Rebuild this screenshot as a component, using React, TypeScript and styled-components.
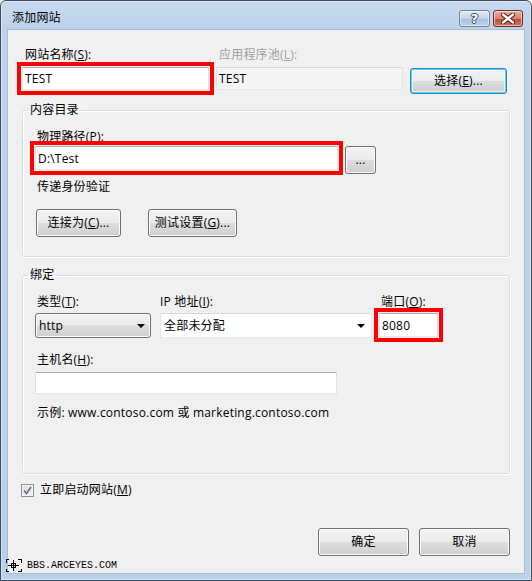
import React from 'react';
import styled, { createGlobalStyle } from 'styled-components';

const FONT = `"Open Sans", "Noto Sans CJK SC", sans-serif`;

const Global = createGlobalStyle`
  html, body { margin: 0; padding: 0; background: #ffffff; }
  * { box-sizing: border-box; }
`;

const Window = styled.div`
  position: relative;
  width: 532px;
  height: 581px;
  display: flex;
  flex-direction: column;
  font-family: ${FONT};
  font-size: 12px;
  letter-spacing: 0.2px;
  color: #000;
  border: 1px solid #3b4b5f;
  border-radius: 6px 6px 0 0;
  background: linear-gradient(to bottom, #c6d9ee 0px, #bdd3eb 30px, #b9d1ea 100%);
  padding: 0 6px 6px 6px;
  box-shadow: inset 0 0 0 1px rgba(255, 255, 255, 0.45);
`;

const TitleBar = styled.div`
  height: 28px;
  display: flex;
  align-items: flex-start;
  flex-shrink: 0;
`;

const Title = styled.div`
  margin: 9px 0 0 5px;
  line-height: 16px;
  font-size: 12px;
  color: #000;
  flex: 1;
`;

const CaptionButtons = styled.div`
  display: flex;
  gap: 3px;
  margin: 9px 2px 0 0;
`;

const CaptionButton = styled.div<{ $kind: 'help' | 'close' }>`
  width: ${(p) => (p.$kind === 'help' ? 31 : 30)}px;
  height: 17px;
  border-radius: 3px;
  border: 1px solid ${(p) => (p.$kind === 'help' ? '#6e8096' : '#6b2a22')};
  background: ${(p) =>
    p.$kind === 'help'
      ? 'linear-gradient(to bottom, #e3ecf6 0%, #c3d4e8 50%, #a9c0dc 51%, #bcd2ea 100%)'
      : 'linear-gradient(to bottom, #eab1a4 0%, #d5806f 50%, #c2493a 51%, #d0715c 100%)'};
  box-shadow: inset 0 0 0 1px rgba(255, 255, 255, 0.55);
  display: flex;
  align-items: center;
  justify-content: center;
`;

const HelpGlyph = styled.span`
  font-family: "DejaVu Sans", sans-serif;
  font-weight: bold;
  font-size: 13px;
  line-height: 13px;
  color: #ffffff;
  text-shadow: 1px 0 0 #3d4f66, -1px 0 0 #3d4f66, 0 1px 0 #3d4f66, 0 -1px 0 #3d4f66;
`;

const Client = styled.div`
  position: relative;
  flex: 1;
  background: #f0f0f0;
  border: 1px solid #a9bcd3;
  padding: 17px 13px 0 14px;
  display: flex;
  flex-direction: column;
`;

const TopGrid = styled.div`
  display: grid;
  grid-template-columns: 187px 187px 97px;
  column-gap: 7px;
  row-gap: 4px;
  align-items: start;
`;

const Label = styled.div<{ $indent?: number; $disabled?: boolean }>`
  line-height: 16px;
  padding-left: ${(p) => (p.$indent ?? 2)}px;
  color: ${(p) => (p.$disabled ? '#a0a0a0' : '#000')};
  white-space: nowrap;
  u { text-decoration: underline; text-underline-offset: 1px; }
`;

const TextBox = styled.div<{ $h?: number; $w?: number; $mark?: boolean; $disabled?: boolean }>`
  height: ${(p) => p.$h ?? 23}px;
  ${(p) => (p.$w ? `width: ${p.$w}px;` : '')}
  border: 1px solid;
  border-color: ${(p) => (p.$disabled ? '#d7d7d7 #e3e3e3 #e8e8e8 #e3e3e3' : '#abadb3 #dbdfe6 #e3e9ef #e2e3ea')};
  background: ${(p) => (p.$disabled ? '#f4f4f4' : '#ffffff')};
  display: flex;
  align-items: center;
  padding: 1px 0 0 2px;
  line-height: 16px;
  color: #000;
  ${(p) => (p.$mark ? 'outline: 4px solid #ff0000; outline-offset: 1px;' : '')}
`;

const Button = styled.button<{ $w: number; $h?: number; $default?: boolean }>`
  width: ${(p) => p.$w}px;
  height: ${(p) => p.$h ?? 28}px;
  padding: 0;
  font-family: ${FONT};
  font-size: 12px;
  letter-spacing: 0.2px;
  line-height: 16px;
  color: #000;
  border-radius: 3px;
  border: 1px solid ${(p) => (p.$default ? '#3c7fb1' : '#707070')};
  background: linear-gradient(to bottom, #f2f2f2 0%, #ebebeb 49%, #dddddd 50%, #cfcfcf 100%);
  box-shadow: ${(p) =>
    p.$default ? 'inset 0 0 0 1px #48d8fb, inset 0 0 0 2px rgba(255,255,255,0.6)' : 'inset 0 0 0 1px #fcfcfc'};
  display: flex;
  align-items: center;
  justify-content: center;
  u { text-decoration: underline; text-underline-offset: 1px; }
`;

const Group = styled.fieldset<{ $mt: number; $pb: number }>`
  margin: ${(p) => p.$mt}px 1px 0 0;
  padding: 0 0 ${(p) => p.$pb}px 0;
  border: 1px solid #d5dfe5;
  border-radius: 3px;
  box-shadow: inset 1px 1px 0 #ffffff, 1px 1px 0 #ffffff;
  min-width: 0;
`;

const Legend = styled.legend`
  margin-left: 5px;
  padding: 0 2px;
  line-height: 16px;
  font-size: 12px;
`;

const GroupBody = styled.div`
  padding: 11px 0 0 12px;
  display: flex;
  flex-direction: column;
`;

const PathRow = styled.div`
  display: flex;
  gap: 7px;
  align-items: flex-start;
  margin-top: 1px;
`;

const PlainText = styled.div<{ $mt: number; $indent?: number }>`
  margin-top: ${(p) => p.$mt}px;
  padding-left: ${(p) => p.$indent ?? 2}px;
  line-height: 16px;
  white-space: nowrap;
  u { text-decoration: underline; text-underline-offset: 1px; }
`;

const ButtonRow = styled.div<{ $mt: number; $gap: number }>`
  display: flex;
  gap: ${(p) => p.$gap}px;
  margin-top: ${(p) => p.$mt}px;
  padding-left: 1px;
`;

const BindGrid = styled.div`
  display: grid;
  grid-template-columns: 116px 212px 57px;
  column-gap: 9px;
  row-gap: 3px;
  align-items: start;
  & > :nth-child(3n) { margin-left: -2px; }
`;

const Arrow = styled.span`
  width: 0;
  height: 0;
  border-left: 4px solid transparent;
  border-right: 4px solid transparent;
  border-top: 4px solid #000;
  margin-left: auto;
`;

const DropList = styled.div`
  height: 25px;
  border: 1px solid #707070;
  border-radius: 3px;
  background: linear-gradient(to bottom, #f2f2f2 0%, #ebebeb 49%, #dddddd 50%, #cfcfcf 100%);
  box-shadow: inset 0 0 0 1px #fcfcfc;
  display: flex;
  align-items: center;
  padding: 1px 5px 0 3px;
  line-height: 16px;
`;

const Combo = styled.div`
  height: 25px;
  border: 1px solid;
  border-color: #dadada #e3e3e3 #e8e8e8 #e3e3e3;
  background: #ffffff;
  display: flex;
  align-items: center;
  padding: 1px 6px 0 3px;
  line-height: 16px;
`;

const CheckRow = styled.div`
  display: flex;
  align-items: center;
  gap: 6px;
  margin-top: 8px;
  margin-left: -1px;
  line-height: 16px;
  u { text-decoration: underline; text-underline-offset: 1px; }
`;

const CheckBox = styled.span`
  width: 13px;
  height: 13px;
  border: 1px solid #8e8f8f;
  background: linear-gradient(135deg, #dcdcdc 0%, #f4f4f4 100%);
  box-shadow: inset 0 0 0 1px #f4f4f4;
  display: flex;
  align-items: center;
  justify-content: center;
`;

const Footer = styled.div`
  display: flex;
  justify-content: flex-end;
  gap: 10px;
  margin-top: 30px;
  margin-right: 1px;
`;

const Watermark = styled.div`
  position: absolute;
  left: -3px;
  bottom: 0px;
  display: flex;
  align-items: center;
  gap: 5px;
  font-family: "Liberation Mono", monospace;
  font-size: 10px;
  letter-spacing: 0;
  line-height: 12px;
  color: #000;
`;

function CloseGlyph() {
  return (
    <svg width="14" height="11" viewBox="0 0 14 11">
      <path d="M2 1.5 L12 9.5 M12 1.5 L2 9.5" stroke="#4a1a14" strokeWidth="4.4" strokeLinecap="round" />
      <path d="M2 1.5 L12 9.5 M12 1.5 L2 9.5" stroke="#ffffff" strokeWidth="2.4" strokeLinecap="round" />
    </svg>
  );
}

function CheckMark() {
  return (
    <svg width="9" height="9" viewBox="0 0 9 9">
      <path d="M1 4.5 L3.5 7.5 L8 1" stroke="#5b6f9e" strokeWidth="1.6" fill="none" />
    </svg>
  );
}

function CrossIcon() {
  return (
    <svg width="17" height="15" viewBox="0 0 17 15">
      <g stroke="#000" strokeWidth="1" fill="none" shapeRendering="crispEdges">
        <path d="M1 4.5 V1.5 H4" />
        <path d="M13 1.5 H16 V4.5" />
        <path d="M1 10.5 V13.5 H4" />
        <path d="M13 13.5 H16 V10.5" />
        <path d="M8.5 2 V13" />
        <path d="M3 7.5 H14" />
        <rect x="6.5" y="5.5" width="4" height="4" />
      </g>
    </svg>
  );
}

export default function App() {
  return (
    <>
      <Global />
      <Window>
        <TitleBar>
          <Title>添加网站</Title>
          <CaptionButtons>
            <CaptionButton $kind="help">
              <HelpGlyph>?</HelpGlyph>
            </CaptionButton>
            <CaptionButton $kind="close">
              <CloseGlyph />
            </CaptionButton>
          </CaptionButtons>
        </TitleBar>
        <Client>
          <TopGrid>
            <Label $indent={3}>
              网站名称(<u>S</u>):
            </Label>
            <Label $indent={3} $disabled>
              应用程序池(<u>L</u>):
            </Label>
            <div />
            <TextBox $mark>TEST</TextBox>
            <TextBox $disabled>TEST</TextBox>
            <Button $w={97} $h={26} $default style={{ marginTop: 1 }}>
              选择(<u>E</u>)...
            </Button>
          </TopGrid>

          <Group $mt={8} $pb={19}>
            <Legend>内容目录</Legend>
            <GroupBody>
              <Label>
                物理路径(<u>P</u>):
              </Label>
              <PathRow>
                <TextBox $w={303} $h={24} $mark>
                  D:\Test
                </TextBox>
                <Button $w={31} $h={28}>
                  ...
                </Button>
              </PathRow>
              <PlainText $mt={5}>传递身份验证</PlainText>
              <ButtonRow $mt={14} $gap={27}>
                <Button $w={85}>
                  连接为(<u>C</u>)...
                </Button>
                <Button $w={89}>
                  测试设置(<u>G</u>)...
                </Button>
              </ButtonRow>
            </GroupBody>
          </Group>

          <Group $mt={10} $pb={52}>
            <Legend>绑定</Legend>
            <GroupBody>
              <BindGrid>
                <Label>
                  类型(<u>T</u>):
                </Label>
                <Label $indent={0}>
                  IP 地址(<u>I</u>):
                </Label>
                <Label $indent={2}>
                  端口(<u>O</u>):
                </Label>
                <DropList>
                  http
                  <Arrow />
                </DropList>
                <Combo>
                  全部未分配
                  <Arrow />
                </Combo>
                <TextBox $h={24} $mark>
                  8080
                </TextBox>
              </BindGrid>
              <PlainText $mt={14}>
                主机名(<u>H</u>):
              </PlainText>
              <TextBox $w={302} $h={22} style={{ marginTop: 4 }} />
              <PlainText $mt={11}>示例: www.contoso.com 或 marketing.contoso.com</PlainText>
            </GroupBody>
          </Group>

          <CheckRow>
            <CheckBox>
              <CheckMark />
            </CheckBox>
            <span>
              立即启动网站(<u>M</u>)
            </span>
          </CheckRow>

          <Footer>
            <Button $w={91}>确定</Button>
            <Button $w={91}>取消</Button>
          </Footer>

          <Watermark>
            <CrossIcon />
            BBS.ARCEYES.COM
          </Watermark>
        </Client>
      </Window>
    </>
  );
}
